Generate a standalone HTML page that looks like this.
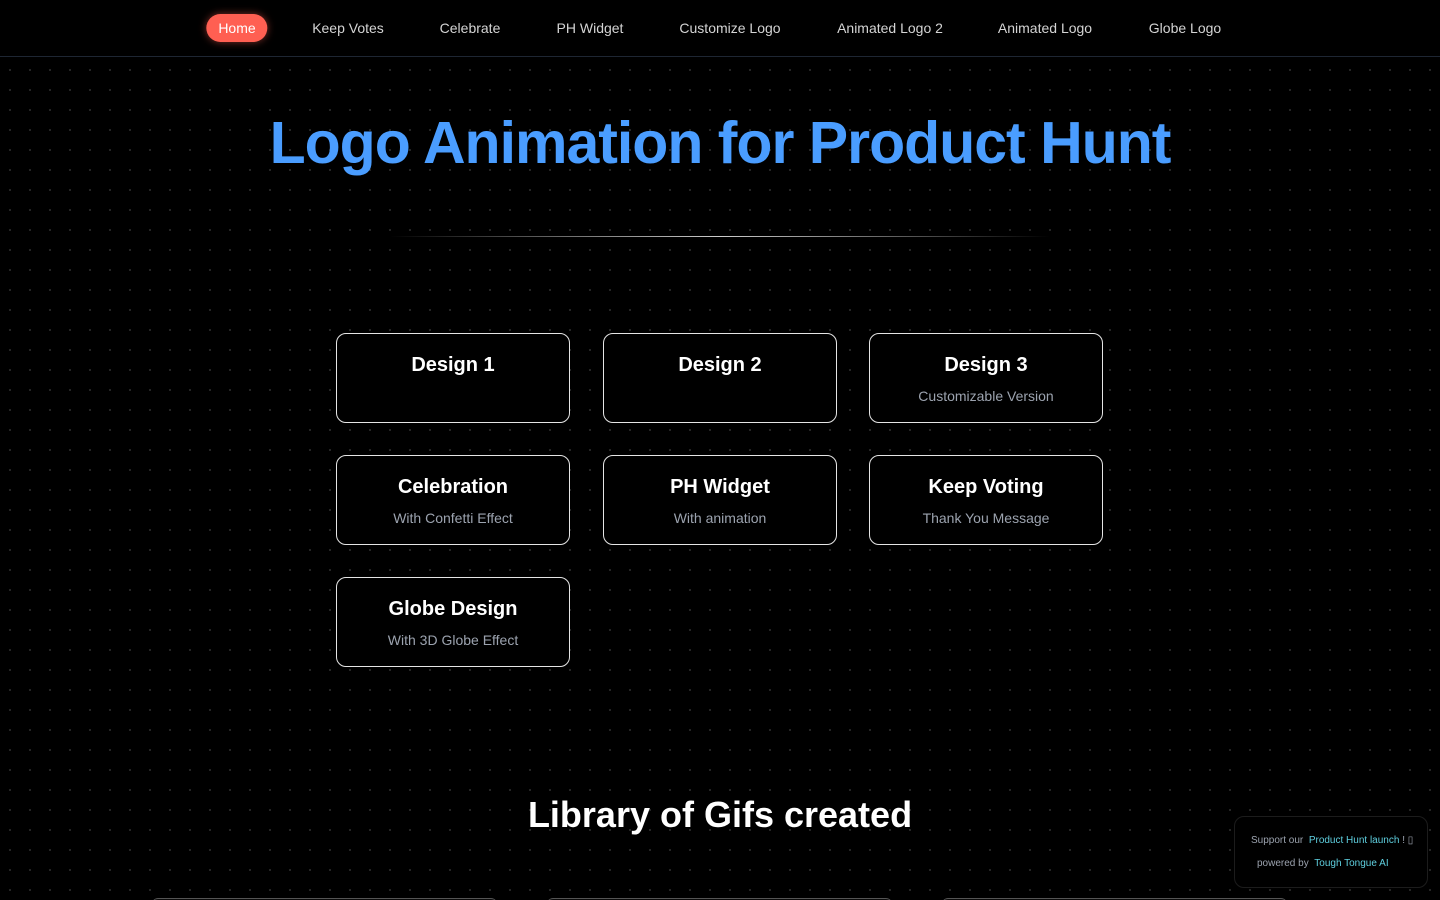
<!DOCTYPE html>
<html><head><meta charset="utf-8"><style>
*{margin:0;padding:0;box-sizing:border-box}
html,body{width:1440px;height:900px;overflow:hidden;background:#000;font-family:"Liberation Sans",sans-serif;color:#fff}
body{background-color:#000;background-image:radial-gradient(circle,#2c2c2c 0.8px,transparent 1.2px);background-size:20px 20px;background-position:0px 0px;position:relative}
nav{position:absolute;top:0;left:0;width:1440px;height:57px;background:#000;border-bottom:1px solid #1e2633}
nav a{position:absolute;top:14px;height:28px;line-height:28px;font-size:14px;color:#d4d4d4;text-decoration:none;transform:translateX(-50%);white-space:nowrap}
nav a.home{background:#ff5f52;color:#fff;padding:0 12px;border-radius:14px;box-shadow:0 0 8px rgba(255,95,82,.5)}
h1{position:absolute;top:109px;left:0;width:1440px;text-align:center;font-size:59px;font-weight:bold;color:#4a9dff;letter-spacing:-1px}
.line{position:absolute;top:236px;left:390px;width:660px;height:1px;background:linear-gradient(90deg,transparent,#ccc 50%,transparent)}
.card{position:absolute;width:234px;height:90px;border:1px solid #e5e5e5;border-radius:10px;background:#000;text-align:center}
.card b{display:block;margin-top:20px;font-size:20px}
.card span{display:block;margin-top:11px;font-size:14px;color:#9ca3af}
h2{position:absolute;top:794px;left:0;width:1440px;text-align:center;font-size:36px;font-weight:bold}
.g{position:absolute;top:898px;width:345px;height:10px;border-top:1px solid #555;border-radius:6px 6px 0 0;background:#0a0a0a}
.sup{position:absolute;left:1234px;top:816px;width:194px;height:72px;border:1px solid #1c1c1c;border-radius:10px;background:#000;font-size:10px;color:#9ca3af}
.sup a{color:#5fd0e0;text-decoration:none}
</style></head><body>
<nav>
<a class="home" style="left:237px">Home</a>
<a style="left:348px">Keep Votes</a>
<a style="left:470px">Celebrate</a>
<a style="left:590px">PH Widget</a>
<a style="left:730px">Customize Logo</a>
<a style="left:890px">Animated Logo 2</a>
<a style="left:1045px">Animated Logo</a>
<a style="left:1185px">Globe Logo</a>
</nav>
<h1>Logo Animation for Product Hunt</h1>
<div class="line"></div>
<div class="card" style="left:336px;top:333px"><b>Design 1</b></div>
<div class="card" style="left:603px;top:333px"><b>Design 2</b></div>
<div class="card" style="left:869px;top:333px"><b>Design 3</b><span>Customizable Version</span></div>
<div class="card" style="left:336px;top:455px"><b>Celebration</b><span>With Confetti Effect</span></div>
<div class="card" style="left:603px;top:455px"><b>PH Widget</b><span>With animation</span></div>
<div class="card" style="left:869px;top:455px"><b>Keep Voting</b><span>Thank You Message</span></div>
<div class="card" style="left:336px;top:577px"><b>Globe Design</b><span>With 3D Globe Effect</span></div>
<h2>Library of Gifs created</h2>
<div class="g" style="left:152px"></div>
<div class="g" style="left:547px"></div>
<div class="g" style="left:942px"></div>
<div class="sup">
<div style="position:absolute;top:18px;left:16px;white-space:nowrap">Support our &nbsp;<a>Product Hunt launch</a> ! ▯</div>
<div style="position:absolute;top:41px;left:22px;white-space:nowrap">powered by &nbsp;<a>Tough Tongue AI</a></div>
</div>
</body></html>
